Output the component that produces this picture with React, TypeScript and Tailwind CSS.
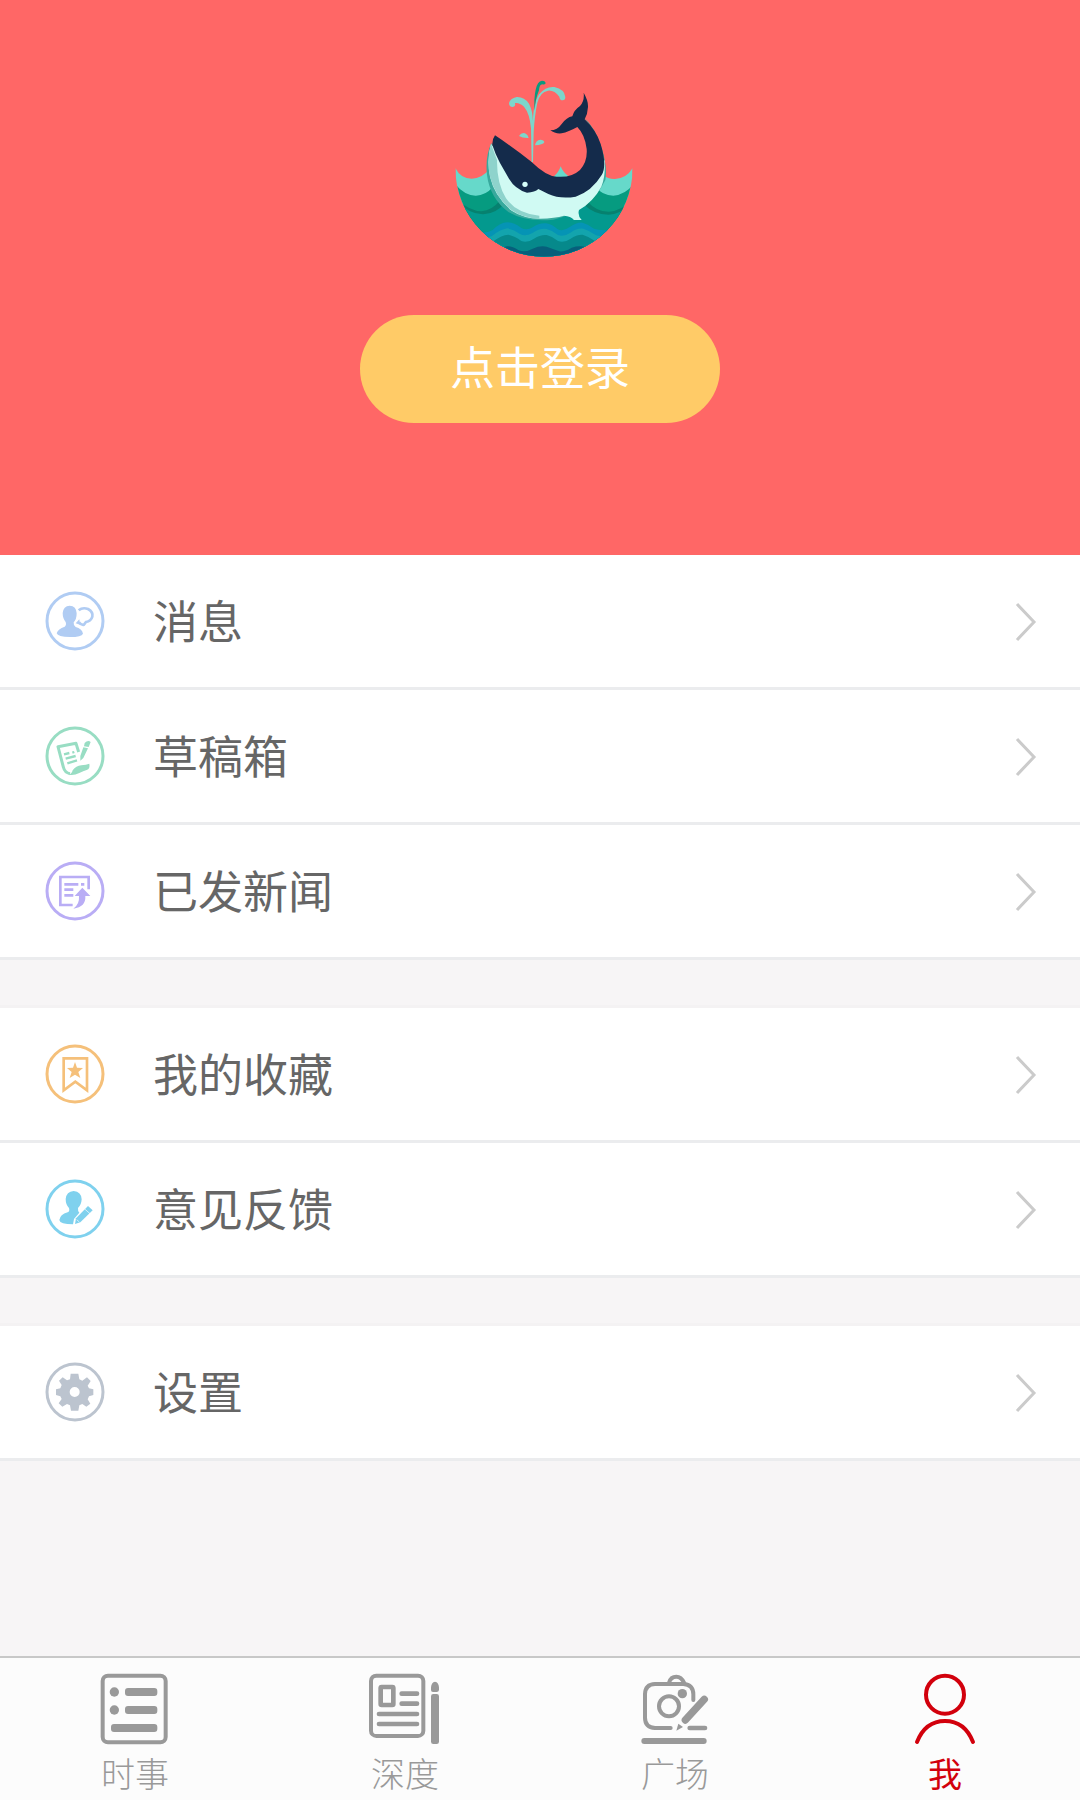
import type { ReactNode } from 'react';

function WhaleLogo() {
  return (
    <svg viewBox="15 30 570 540" className="h-[180px] w-[190px]" role="img" aria-label="whale">
      <defs>
        <clipPath id="sea">
          <path d="M46 294A266 266 0 0 0 578 294Z" />
        </clipPath>
      </defs>
      <g clipPath="url(#sea)">
        <path d="M46 294Q62 326 95 326Q126 326 148 298L362 390L488 316Q506 328 525 327Q560 325 578 294V600H46Z" fill="#66d9ca" />
        <path d="M40 336Q72 378 108 377Q136 377 158 352L300 400L470 352Q486 377 520 377Q560 374 585 336V600H40Z" fill="#069b80" />
        <path d="M50 388Q90 424 125 424Q155 422 178 394L300 420L440 392Q470 426 507 425Q545 423 580 386V600H50Z" fill="#06816f" />
        <path d="M50 394Q90 434 130 433Q168 431 192 402L300 420L430 402Q462 434 505 434Q540 434 580 394V600H50Z" fill="#03998e" />
        <path d="M50 486H125Q140 490 158 480Q180 458 202 457Q222 457 244 474Q260 483 278 472Q298 458 318 460Q338 464 352 477Q368 486 388 472Q410 456 428 458Q448 464 462 476Q490 484 590 482V600H50Z" fill="#0594b5" />
        <path d="M50 496Q130 508 155 499Q180 478 202 475Q222 478 240 492Q256 501 276 490Q300 474 320 477Q340 482 354 495Q370 502 390 489Q410 474 430 476Q450 482 468 496Q490 503 560 498V600H50Z" fill="#13a4ad" />
        <path d="M50 512Q135 524 160 514Q185 495 205 494Q225 498 244 513Q262 520 282 506Q302 493 320 495Q340 500 354 513Q372 520 392 506Q410 493 428 494Q448 500 466 514Q490 520 560 515V600H50Z" fill="#06898b" />
        <path d="M150 540Q178 540 195 530Q212 525 236 541Q255 549 278 536Q300 526 320 530Q342 538 358 544Q374 546 395 533Q415 526 436 530L480 540V600H150Z" fill="#075f7b" />
      </g>
      <path d="M340 321Q357 306 362 289Q368 306 388 321Z" fill="#66d9ca" />
      <path d="M154 220Q135 260 141 315Q150 385 205 426Q260 458 340 449Q450 425 496 330Q504 290 482 225Q465 175 432 142Q478 200 488 260L430 370L300 390Z" fill="#38a99d" />
      <path d="M153 222Q140 270 150 320Q164 380 215 422Q250 445 300 446Q345 445 372 437Q392 438 402 450H425Q412 436 417 420Q460 395 484 350Q497 320 494 270L440 340L300 340L220 300Z" fill="#d0faf3" />
      <path d="M153 222Q138 275 151 323Q166 380 215 421Q250 445 298 446V437Q230 430 198 385Q170 340 171 270Z" fill="#8ed3cc" />
      <path d="M165 196Q222 234 274 275Q318 318 350 320Q394 324 420 300Q443 275 440 237Q435 194 412 171Q385 186 365 190Q345 192 331 181Q352 181 365 162Q380 142 397 139Q402 120 420 108Q434 94 431 68Q445 92 444 111Q443 132 434 148Q468 180 482 222Q502 288 485 315Q455 364 407 380Q360 388 325 372L295 357Q285 367 261 368Q225 357 207 326L180 279Q166 253 157 225Q156 208 165 196Z" fill="#142b4b" />
      <circle cx="255" cy="343" r="8" fill="#d7fffb" />
      <g fill="#7dd6cb">
        <path d="M275 276L273 175Q269 130 252 110Q238 97 225 99Q228 109 218 111Q207 111 207 99Q210 86 230 81Q253 80 267 101Q279 124 278 153Q281 98 297 73Q318 48 343 51Q374 58 376 81Q376 91 368 91Q359 91 358 80Q343 60 324 62Q300 66 292 98Q284 135 281 186L279 276Z" />
        <path d="M237 198Q244 187 255 190Q264 194 266 204Q248 205 237 198Z" />
        <path d="M285 226Q287 211 301 209Q312 209 313 217Q309 225 285 226Z" />
      </g>
      <path d="M284 122Q281 86 287 59Q292 34 306 32Q317 33 317 40Q314 45 307 43Q298 43 297 61Q286 87 284 122Z" fill="#0b9a7e" />
    </svg>
  );
}

function RoundIcon({ box, cy, color, children }: { box: string; cy: number; color: string; children: ReactNode }) {
  return (
    <svg viewBox={box} className="size-[60px] shrink-0" style={{ color }} fill="currentColor" stroke="none" aria-hidden="true">
      <circle cx="135" cy={cy} r="84" fill="none" stroke="currentColor" strokeWidth="9" />
      {children}
    </svg>
  );
}

const messageIcon = (
  <RoundIcon box="45 123 180 180" cy={213} color="#b0ccf3">
    <path d="M119 167Q139 168 140 190Q140 208 131 217Q130 227 137 231Q156 236 159 251Q155 261 120 261Q83 261 80 250Q84 236 104 230Q110 226 107 216Q98 205 98 189Q100 168 119 167Z" />
    <path d="M146 181Q158 171 174 177Q190 186 187 200Q183 214 168 216L162 224Q154 226 147 217" fill="none" stroke="currentColor" strokeWidth="8" />
    <path d="M137 220L148 208L150 224Z" />
  </RoundIcon>
);

const draftIcon = (
  <RoundIcon box="45 47 180 180" cy={137} color="#98ddc3">
    <g fill="none" stroke="currentColor" strokeWidth="9" strokeLinejoin="round">
      <path d="M146 125L138 99L84 109L100 170Q104 187 120 190" />
      <path d="M102 132L118 128M107 145L137 137M112 159L141 150" strokeWidth="7" />
      <path d="M127 127L133 125" strokeWidth="7" />
    </g>
    <path d="M116 193Q126 190 128 180Q138 167 154 165Q169 163 178 160Q181 176 170 179Q160 182 148 188Q132 196 116 193Z" />
    <path d="M164 98Q174 88 182 95L176 110L162 108ZM160 111L174 114L160 143L151 151L151 137Z" />
  </RoundIcon>
);

const publishedIcon = (
  <RoundIcon box="45 47 180 180" cy={137} color="#b9adf5">
    <path d="M128 179H91V95H176V132" fill="none" stroke="currentColor" strokeWidth="8" />
    <path d="M103 117H145M153 117H163M103 133H130M103 150H130" fill="none" stroke="currentColor" strokeWidth="8" />
    <path d="M157 127L181 152H166Q168 185 130 190Q149 177 147 152H134Z" />
  </RoundIcon>
);

const favouriteIcon = (
  <RoundIcon box="45 41 180 180" cy={131} color="#f5c07a">
    <path d="M101 84H171V180L136 154L101 180Z" fill="none" stroke="currentColor" strokeWidth="8" />
    <path d="M135 95L141 112L159 113L145 125L151 143L135 133L119 143L125 125L111 113L129 112Z" />
  </RoundIcon>
);

const feedbackIcon = (
  <RoundIcon box="45 41 180 180" cy={131} color="#7fd1ee">
    <path d="M131 77Q154 79 155 102Q154 119 144 128Q143 138 148 142L132 161L129 177Q90 177 88 164Q90 148 113 141Q120 138 117 128Q107 118 107 101Q109 79 131 77Z" />
    <path d="M174 122L188 135L151 171L135 176L138 159Z" />
    <path d="M163 130L180 145M140 163L148 170" fill="none" stroke="#ffffff" strokeWidth="2" />
  </RoundIcon>
);

const settingsIcon = (
  <RoundIcon box="45 50 180 180" cy={140} color="#bcc4cf">
    <path
      fillRule="evenodd"
      d="M122 85H145L148 102L157 106L171 96L182 107L173 121L177 129L190 132V149L177 153L173 162L181 175L169 184L157 176L148 180L145 196H123L120 180L111 176L97 184L86 174L95 161L91 153L78 149V132L91 129L95 119L87 106L98 96L111 105L120 102ZM134 125A15 15 0 1 0 134 155A15 15 0 1 0 134 125Z"
    />
  </RoundIcon>
);

const groups = [
  [
    { label: '消息', icon: messageIcon },
    { label: '草稿箱', icon: draftIcon },
    { label: '已发新闻', icon: publishedIcon },
  ],
  [
    { label: '我的收藏', icon: favouriteIcon },
    { label: '意见反馈', icon: feedbackIcon },
  ],
  [{ label: '设置', icon: settingsIcon }],
];

function TabIcon({ box, children }: { box: string; children: ReactNode }) {
  return (
    <svg viewBox={box} className="size-[72px]" fill="none" stroke="currentColor" strokeLinecap="round" aria-hidden="true">
      {children}
    </svg>
  );
}

const tabs = [
  {
    label: '时事',
    icon: (
      <TabIcon box="117 99 216 216">
        <rect x="128" y="107" width="189" height="200" rx="16" strokeWidth="12" />
        <g fill="currentColor" stroke="none">
          <circle cx="163" cy="156" r="14" />
          <circle cx="163" cy="210" r="14" />
          <rect x="195" y="144" width="97" height="24" rx="9" />
          <rect x="195" y="198" width="97" height="24" rx="9" />
          <rect x="153" y="252" width="139" height="24" rx="9" />
        </g>
      </TabIcon>
    ),
  },
  {
    label: '深度',
    icon: (
      <TabIcon box="927 99 216 216">
        <rect x="933" y="107" width="157" height="181" rx="16" strokeWidth="12" />
        <rect x="962" y="141" width="38" height="54" rx="3" strokeWidth="14" />
        <path d="M1025 161H1071M1025 191H1071M957 222H1071M957 252H1071" strokeWidth="14" />
        <g fill="currentColor" stroke="none">
          <path d="M1113 150V142Q1114 127 1125 125Q1136 127 1137 142V150Q1136 156 1130 156H1119Q1113 156 1113 150Z" />
          <rect x="1113" y="162" width="24" height="150" rx="7" />
        </g>
      </TabIcon>
    ),
  },
  {
    label: '广场',
    icon: (
      <TabIcon box="117 99 216 216">
        <path d="M212 264H165Q135 262 135 233V162Q136 133 165 132H250Q280 134 280 163V180" strokeWidth="12" />
        <path d="M207 128Q212 110 229 110Q244 110 252 128" strokeWidth="12" />
        <circle cx="207" cy="199" r="30" strokeWidth="12" />
        <path d="M313 178L256 240" strokeWidth="22" />
        <path d="M269 264H315" strokeWidth="14" />
        <path d="M133 303H311" strokeWidth="18" />
        <g fill="currentColor" stroke="none">
          <circle cx="247" cy="161" r="14" />
          <path d="M235 251L249 261L229 272Z" />
        </g>
      </TabIcon>
    ),
  },
  {
    label: '我',
    active: true,
    icon: (
      <TabIcon box="927 99 216 216">
        <circle cx="1035" cy="164" r="57" strokeWidth="12" />
        <path d="M951 306Q976 243 1035 243Q1094 243 1119 306" strokeWidth="12" />
      </TabIcon>
    ),
  },
];

export default function App() {
  return (
    <div className="flex min-h-screen flex-col bg-[#f7f5f6] font-['Noto_Sans_CJK_SC',sans-serif]">
      <header className="flex flex-col items-center bg-[#ff6766] pt-20 pb-[132px]">
        <WhaleLogo />
        <button className="mt-[55px] flex h-[108px] w-[360px] items-center justify-center rounded-full bg-[#ffcb67] pb-2 text-[45px] leading-none text-white">
          点击登录
        </button>
      </header>

      <main className="flex flex-1 flex-col gap-[45px]">
        {groups.map((group, i) => (
          <ul key={i} className={i === 0 ? '' : 'border-t-3 border-[#f4f2f3]'}>
            {group.map((item) => (
              <li key={item.label} className="border-b-3 border-[#ebecee] bg-white">
                <a href="#" className="flex h-[132px] items-center pr-[42px] pl-[45px]">
                  {item.icon}
                  <span className="ml-12 flex-1 pb-[3px] text-[45px] leading-none text-[#666666]">{item.label}</span>
                  <svg viewBox="0 0 24 42" className="h-[42px] w-6" fill="none" stroke="#cbcbcb" strokeWidth="3" aria-hidden="true">
                    <path d="M3 4L20 22L3 40" />
                  </svg>
                </a>
              </li>
            ))}
          </ul>
        ))}
      </main>

      <nav className="grid grid-cols-4 border-t-2 border-[#c8c8c8] bg-[#fcfcfc] pt-[15px] pb-2">
        {tabs.map((tab) => (
          <a
            key={tab.label}
            href="#"
            aria-current={tab.active ? 'page' : undefined}
            className={tab.active ? 'flex flex-col items-center text-[#d2000c]' : 'flex flex-col items-center text-[#999999]'}
          >
            {tab.icon}
            <span className={tab.active ? 'mt-2.5 pb-0.5 text-[34px] leading-[35px]' : 'mt-2.5 pb-0.5 text-[34px] leading-[35px] font-light'}>
              {tab.label}
            </span>
          </a>
        ))}
      </nav>
    </div>
  );
}
